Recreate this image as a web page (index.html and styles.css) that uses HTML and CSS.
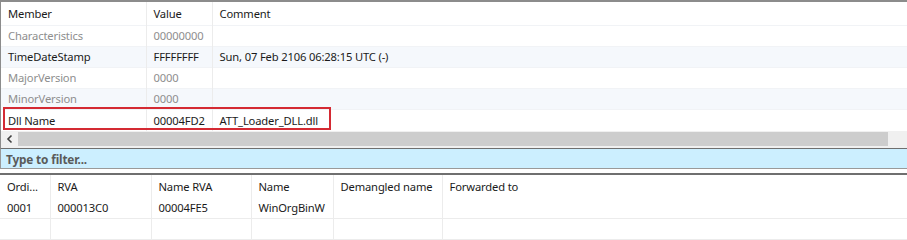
FILE: index.html
```html
<!DOCTYPE html>
<html lang="en">

<head>
    <meta charset="UTF-8">
    <meta name="viewport" content="width=device-width, initial-scale=1.0">
    <title>Exports</title>
    <link rel="stylesheet" href="styles.css">
</head>

<body>
    <div class="upper">
        <table class="grid members">
            <colgroup>
                <col class="c-member">
                <col class="c-value">
                <col>
            </colgroup>
            <tr class="head">
                <th>Member</th>
                <th>Value</th>
                <th>Comment</th>
            </tr>
            <tr class="dim">
                <td>Characteristics</td>
                <td>00000000</td>
                <td></td>
            </tr>
            <tr class="alt">
                <td>TimeDateStamp</td>
                <td>FFFFFFFF</td>
                <td>Sun, 07 Feb 2106 06:28:15 UTC (-)</td>
            </tr>
            <tr class="dim">
                <td>MajorVersion</td>
                <td>0000</td>
                <td></td>
            </tr>
            <tr class="dim alt">
                <td>MinorVersion</td>
                <td>0000</td>
                <td></td>
            </tr>
            <tr class="marked">
                <td>Dll Name</td>
                <td>00004FD2</td>
                <td>ATT_Loader_DLL.dll</td>
            </tr>
        </table>
        <div class="highlight"></div>

        <div class="hscroll">
            <span class="arrow">
                <svg width="8" height="10" viewBox="0 0 8 10">
                    <path d="M5.5 1.5 L2 5 L5.5 8.5" fill="none" stroke="#404040" stroke-width="1.6" />
                </svg>
            </span>
            <span class="thumb"></span>
            <span class="track"></span>
        </div>
    </div>

    <div class="filter">Type to filter...</div>

    <table class="grid exports">
        <colgroup>
            <col class="c-ord">
            <col class="c-rva">
            <col class="c-namerva">
            <col class="c-name">
            <col class="c-demangled">
            <col>
        </colgroup>
        <tr class="head">
            <th>Ordi...</th>
            <th>RVA</th>
            <th>Name RVA</th>
            <th>Name</th>
            <th>Demangled name</th>
            <th>Forwarded to</th>
        </tr>
        <tr>
            <td>0001</td>
            <td>000013C0</td>
            <td>00004FE5</td>
            <td>WinOrgBinW</td>
            <td></td>
            <td></td>
        </tr>
        <tr class="empty">
            <td></td>
            <td></td>
            <td></td>
            <td></td>
            <td></td>
            <td></td>
        </tr>
    </table>
</body>

</html>
```

FILE: styles.css
```css
* {
    box-sizing: border-box;
}

body {
    margin: 0;
    width: 907px;
    height: 240px;
    overflow: hidden;
    background-color: #fff;
    font-family: "Noto Sans", "Liberation Sans", sans-serif;
    font-size: 11.2px;
    letter-spacing: -0.15px;
    color: #1a1a1a;
}

.upper {
    position: relative;
    border-top: 2px solid #8c8c8c;
    border-left: 1px solid #8c8c8c;
}

.grid {
    width: 100%;
    border-collapse: collapse;
    table-layout: fixed;
}

.grid th,
.grid td {
    padding: 0 0 0 7px;
    text-align: left;
    font-weight: normal;
    white-space: nowrap;
    overflow: hidden;
    border-left: 1px solid #ececec;
}

.grid th:first-child,
.grid td:first-child {
    border-left: none;
}

/* upper table */
.c-member {
    width: 145px;
}

.c-value {
    width: 66px;
}

.members .head {
    height: 23px;
}

.members tr {
    height: 21px;
}

.members td {
    border-top: 1px solid #f1f3f6;
}

.members .alt {
    background-color: #f5f8fc;
}

.members .dim {
    color: #8e8e8e;
}

.members .marked {
    height: 22px;
}

.highlight {
    position: absolute;
    left: 2px;
    top: 105px;
    width: 328px;
    height: 23px;
    border: 2px solid #d42a33;
}

.hscroll {
    display: flex;
    height: 17px;
    background-color: #f0f0f0;
    padding: 1px 0 2px 0;
}

.arrow {
    width: 17px;
    display: flex;
    align-items: center;
    justify-content: center;
}

.thumb {
    width: 870px;
    background-color: #cdcdcd;
}

.track {
    flex: 1;
}

/* filter */
.filter {
    height: 21px;
    padding: 2px 0 0 5px;
    background-color: #ccefff;
    border-top: 1px solid #6f6f6f;
    border-bottom: 1px solid #9a9a9a;
    border-left: 1px solid #9a9a9a;
    font-weight: bold;
    color: #5a5a5a;
    font-size: 11.8px;
    margin-bottom: 4px;
}

/* lower table */
.exports {
    border-top: 2px solid #6f6f6f;
}

.c-ord {
    width: 50px;
}

.c-rva {
    width: 101px;
}

.c-namerva {
    width: 100px;
}

.c-name {
    width: 82px;
}

.c-demangled {
    width: 109px;
}

.exports .head {
    height: 23px;
}

.exports tr {
    height: 21px;
}

.exports .empty td {
    border-top: 1px solid #ececec;
    border-bottom: 1px solid #ececec;
}
```
